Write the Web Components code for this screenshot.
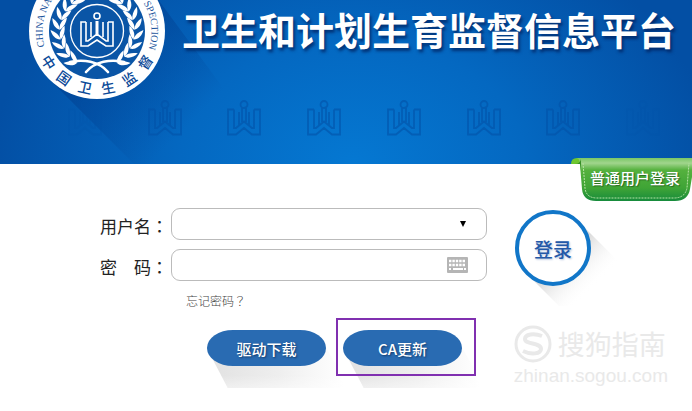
<!DOCTYPE html>
<html lang="zh-CN">
<head>
<meta charset="utf-8">
<title>卫生和计划生育监督信息平台</title>
<style>
	body {
		margin: 0;
		background: #fff;
		color: #222;
		font-family: "Noto Sans CJK SC", sans-serif;
	}
</style>
</head>
<body>

<template id="book-mark-template">
	<style>
		:host {
			display: block;
			width: 34px;
			height: 36px;
		}

		svg {
			display: block;
			width: 100%;
			height: 100%;
			fill: none;
			stroke: currentColor;
			stroke-width: 1.8;
		}
	</style>
	<svg viewBox="0 0 34 36" aria-hidden="true">
		<circle cx="17" cy="4.5" r="3.5"/>
		<path d="M7 9.5H1V34.5H9L17 28L25 34.5H33V9.5H27M7 9.5V28H9L17 21.5L25 28H27V9.5M12 12V25M22 12V25M15 8V22M19 8V22"/>
	</svg>
</template>

<template id="site-emblem-template">
	<style>
		:host {
			display: block;
			width: 138px;
			height: 100px;
		}

		svg {
			display: block;
		}

		.latin {
			font: 10px "Liberation Serif", serif;
			fill: #1d559c;
		}

		.han {
			font: 500 14px "Noto Sans CJK SC", sans-serif;
			fill: #0b4a98;
			text-anchor: middle;
		}
	</style>
	<svg width="138" height="100" viewBox="-69 -31 138 100" role="img" aria-label="中国卫生监督">
		<defs>
			<path id="ring" d="M-50 22A54.6 54.6 0 0 1 -52 -16A54.6 54.6 0 0 1 52 -16A54.6 54.6 0 0 1 51.5 18"/>
		</defs>
		<circle r="68" fill="#fff"/>
		<circle r="48" fill="#0a55a6"/>
		<g class="laurel" fill="#fff"></g>
		<g fill="none" stroke="#fff" stroke-width="2.6" stroke-linecap="round">
			<path d="M-27 31C-14 28 2 30 11 41"/>
			<path d="M27 31C14 28 -2 30 -11 41"/>
		</g>
		<circle r="26.5" fill="#0a55a6" stroke="#fff" stroke-width="1.3"/>
		<g fill="none" stroke="#fff" stroke-width="1.6">
			<circle cx="0" cy="-15" r="3"/>
			<path d="M-11 -9H-16V15H-9L0 9L9 15H16V-9H11M-11 -9V10H-9L0 3L9 10H11V-9M-6 -9V6M6 -9V6"/>
			<path d="M0 -10V3" stroke-width="3"/>
		</g>
		<text class="latin"><textPath href="#ring" startOffset="7">CHINA NA</textPath></text>
		<text class="latin" text-anchor="end"><textPath href="#ring" startOffset="100%">SPECTION</textPath></text>
		<g class="motto"></g>
	</svg>
</template>

<template id="site-header-template">
	<style>
		:host {
			display: flex;
			flex-direction: column;
			justify-content: space-between;
			box-sizing: border-box;
			height: 164px;
			padding-bottom: 28px;
			position: relative;
			background: radial-gradient(ellipse 360px 260px at 51% 100%, #0578d2 0%, #0468c1 48%, #034fa4 100%);
		}

		.shade {
			position: absolute;
			left: 0;
			top: 0;
		}

		.top {
			display: flex;
			position: relative;
			padding-left: 28px;
			gap: 16px;
		}

		h1 {
			margin: 0;
			color: #fff;
			font-size: 38px;
			font-weight: 700;
			line-height: 58px;
			white-space: nowrap;
			text-shadow: 2px 3px 3px rgba(0, 30, 90, 0.7);
		}

		.marks {
			display: flex;
			justify-content: space-between;
			position: relative;
			padding: 0 32px 0 68px;
			color: #0352a8;
		}

		book-mark {
			opacity: 0.6;
		}

		book-mark:first-child,
		book-mark:last-child {
			opacity: 0.2;
		}
	</style>
	<svg class="shade" width="330" height="164" aria-hidden="true">
		<defs>
			<linearGradient id="fall" gradientUnits="userSpaceOnUse" x1="98" y1="31" x2="190" y2="123">
				<stop offset="0" stop-color="#003c8c" stop-opacity="0.6"/>
				<stop offset="1" stop-color="#003c8c" stop-opacity="0"/>
			</linearGradient>
		</defs>
		<path d="M50 80L134 164H279L146 -17Z" fill="url(#fall)"/>
	</svg>
	<div class="top">
		<site-emblem></site-emblem>
		<h1><slot></slot></h1>
	</div>
	<div class="marks">
		<book-mark></book-mark>
		<book-mark></book-mark>
		<book-mark></book-mark>
		<book-mark></book-mark>
		<book-mark></book-mark>
		<book-mark></book-mark>
		<book-mark></book-mark>
		<book-mark></book-mark>
	</div>
</template>

<template id="ribbon-tab-template">
	<style>
		:host {
			position: absolute;
			top: 157px;
			right: 0;
			width: 121px;
			height: 45px;
		}

		svg {
			position: absolute;
			left: 0;
			top: 0;
		}

		button {
			position: relative;
			width: 100%;
			height: 100%;
			margin: 0;
			padding: 0 12px 4px 19px;
			border: 0;
			background: none;
			color: #fff;
			font: 500 15px "Noto Sans CJK SC", sans-serif;
			white-space: nowrap;
			text-shadow: 1px 1px 1px #27691f;
		}
	</style>
	<svg width="121" height="45" aria-hidden="true">
		<defs>
			<linearGradient id="green" x1="0" y1="0" x2="0" y2="1">
				<stop offset="0" stop-color="#7ac765"/>
				<stop offset="0.12" stop-color="#a1d58d"/>
				<stop offset="0.28" stop-color="#55b13e"/>
				<stop offset="0.7" stop-color="#3fa436"/>
				<stop offset="1" stop-color="#168b3c"/>
			</linearGradient>
		</defs>
		<path d="M0 7Q0 1 6 1H14V7Z" fill="#6ec62f"/>
		<path d="M6 1H121V20L119 32Q117 44 104 44H25Q12 44 11 32L9 8Q9 2 6 1Z" fill="url(#green)"/>
		<path d="M4 7Q9 7 10 2V14L9 7Z" fill="#378d27"/>
		<path d="M12 6L14 31Q15 41 26 41H103Q114 41 116 31L118 6" fill="none" stroke="#b8e3a5" stroke-width="1" stroke-dasharray="2 1"/>
	</svg>
	<button type="button"><slot></slot></button>
</template>

<template id="form-field-template">
	<style>
		:host {
			display: flex;
			align-items: center;
		}

		label {
			width: 71px;
			padding-top: 4px;
			font-size: 17px;
			font-weight: 400;
			line-height: 26px;
			white-space: pre;
			color: #222;
		}

		.colon {
			font-family: "Noto Sans CJK TC", sans-serif;
		}

		.box {
			display: flex;
			flex: 1;
			align-items: center;
			box-sizing: border-box;
			height: 32px;
			padding-right: 18px;
			border: 1px solid #bbb;
			border-radius: 9px;
			background: #fff;
		}

		input,
		select {
			flex: 1;
			min-width: 0;
			height: 28px;
			padding: 0 12px;
			border: 0;
			outline: 0;
			background: none;
			appearance: none;
			font: inherit;
		}
	</style>
	<label for="control"><span class="name"></span><span class="colon" lang="zh-TW">：</span></label>
	<div class="box"></div>
</template>

<template id="login-button-template">
	<style>
		:host {
			display: block;
			position: relative;
			width: 76px;
			height: 76px;
		}

		svg {
			position: absolute;
			left: 0;
			top: 0;
		}

		button {
			position: relative;
			box-sizing: border-box;
			width: 76px;
			height: 76px;
			padding: 0;
			border: 4px solid #1176c8;
			border-radius: 50%;
			background: #fff;
			color: #2459a8;
			font: 500 19px "Noto Sans CJK SC", sans-serif;
			text-shadow: 1px 1px 2px #b4c4dd;
		}
	</style>
	<svg width="110" height="100" aria-hidden="true">
		<defs>
			<linearGradient id="cast" gradientUnits="userSpaceOnUse" x1="50" y1="50" x2="78" y2="78">
				<stop offset="0" stop-color="#ddd"/>
				<stop offset="1" stop-color="#fff" stop-opacity="0"/>
			</linearGradient>
		</defs>
		<path d="M14 66L44 96H104V52L68 16Z" fill="url(#cast)"/>
	</svg>
	<button type="submit"><slot></slot></button>
</template>

<template id="pill-button-template">
	<style>
		:host {
			display: block;
			position: relative;
			width: 119px;
			height: 36px;
		}

		svg {
			position: absolute;
			left: 0;
			top: 0;
		}

		button {
			position: relative;
			width: 100%;
			height: 100%;
			padding: 0;
			border: 0;
			border-radius: 26px / 18px;
			background: #296bb2;
			color: #fff;
			font: 500 15px "Noto Sans CJK SC", sans-serif;
			text-shadow: 1px 1px 2px #123a6b;
		}

		:host([marked])::after {
			content: "";
			position: absolute;
			inset: -12px -14px -10px -7px;
			border: 2px solid #8030b0;
			pointer-events: none;
		}
	</style>
	<svg width="145" height="68" aria-hidden="true">
		<defs>
			<linearGradient id="cast" x1="0" y1="0" x2="1" y2="0">
				<stop offset="0" stop-color="#e2e2e2"/>
				<stop offset="0.5" stop-color="#eee"/>
				<stop offset="1" stop-color="#fff"/>
			</linearGradient>
			<linearGradient id="fade" x1="0" y1="0" x2="0" y2="1">
				<stop offset="0.6" stop-color="#fff" stop-opacity="0"/>
				<stop offset="1" stop-color="#fff" stop-opacity="0.7"/>
			</linearGradient>
		</defs>
		<path d="M5 28L25 66H128Q142 62 132 40L117 14Z" fill="url(#cast)"/>
		<path d="M5 28L25 66H128Q142 62 132 40L117 14Z" fill="url(#fade)"/>
	</svg>
	<button type="button"><slot></slot></button>
</template>

<template id="login-panel-template">
	<style>
		:host {
			display: block;
		}

		form {
			display: flex;
			gap: 28px;
			padding: 44px 101px 0 100px;
		}

		.fields {
			display: flex;
			flex: 1;
			flex-direction: column;
			gap: 9px;
		}

		a {
			align-self: flex-start;
			margin: 2px 0 0 86px;
			color: #444;
			font-size: 12px;
			font-weight: 300;
			line-height: 18px;
			text-decoration: none;
		}

		.mark {
			font-family: "Noto Sans CJK TC", sans-serif;
		}

		login-button {
			margin-top: 2px;
		}
	</style>
	<form>
		<div class="fields">
			<form-field name="用户名" kind="select"></form-field>
			<form-field name="密　码" kind="password"></form-field>
			<a href="#forgot">忘记密码<span class="mark" lang="zh-TW">？</span></a>
		</div>
		<login-button>登录</login-button>
	</form>
</template>

<template id="water-mark-template">
	<style>
		:host {
			display: block;
			color: #e9e9e9;
		}

		.brand {
			display: flex;
			align-items: center;
			gap: 6px;
			font-size: 27px;
			line-height: 40px;
		}

		.url {
			font: 400 19px/24px "Liberation Sans", sans-serif;
		}
	</style>
	<div class="brand">
		<svg width="38" height="38" viewBox="0 0 38 38" fill="none" stroke="currentColor" aria-hidden="true">
			<circle cx="19" cy="19" r="17" stroke-width="3"/>
			<path d="M28 11C20 8 11 9 11 14C11 20 27 17 27 24C27 29 17 30 9 26" stroke-width="4"/>
		</svg>
		<span>搜狗指南</span>
	</div>
	<div class="url">zhinan.sogou.com</div>
</template>

<template id="tool-bar-template">
	<style>
		:host {
			display: flex;
			justify-content: space-between;
			padding: 14px 24px 0 207px;
		}

		.buttons {
			display: flex;
			gap: 17px;
			padding-top: 6px;
		}
	</style>
	<div class="buttons"><slot></slot></div>
	<water-mark></water-mark>
</template>

<site-header>卫生和计划生育监督信息平台</site-header>
<ribbon-tab>普通用户登录</ribbon-tab>
<main>
	<login-panel></login-panel>
	<tool-bar>
		<pill-button>驱动下载</pill-button>
		<pill-button marked>CA更新</pill-button>
	</tool-bar>
</main>

<script>
	class TemplateElement extends HTMLElement {
		constructor() {
			super();
			this.attachShadow({mode: 'open'});
			const template = document.getElementById(this.localName + '-template').content;
			this.shadowRoot.appendChild(template.cloneNode(true));
		}
	}

	class SiteEmblem extends TemplateElement {
		connectedCallback() {
			const leaf = 'M0 0C3 -3.5 9 -3.5 14 0C9 2 4 2 0 0Z';
			let laurel = '';
			// leaves run up both sides in pairs from the crossed stems
			for (let angle = 122; angle < 250; angle += 15) {
				const rad = angle * Math.PI / 180;
				const x = 37 * Math.cos(rad);
				const y = 37 * Math.sin(rad);
				const shape = `<path d="${leaf}" transform="translate(${x} ${y}) rotate(${angle + 55})"/>` +
					`<path d="${leaf}" transform="translate(${x} ${y}) rotate(${angle + 118})"/>`;
				laurel += shape + `<g transform="scale(-1 1)">${shape}</g>`;
			}
			this.shadowRoot.querySelector('.laurel').innerHTML = laurel;

			const angles = [57, 35, 12, -11, -34, -57];
			this.shadowRoot.querySelector('.motto').innerHTML = [...'中国卫生监督']
				.map((char, i) => `<text class="han" y="63" transform="rotate(${angles[i]})">${char}</text>`)
				.join('');
		}
	}

	class FormField extends TemplateElement {
		connectedCallback() {
			this.shadowRoot.querySelector('.name').textContent = this.getAttribute('name');
			this.shadowRoot.querySelector('.box').innerHTML = this.getAttribute('kind') === 'select'
				? `<select id="control"><option></option></select>
					<svg width="8" height="8" aria-hidden="true"><path d="M0 1H6L3 7Z" fill="#000"/></svg>`
				: `<input id="control" type="password">
					<svg width="21" height="16" aria-hidden="true">
						<rect width="21" height="16" rx="1" fill="#b5b5b5"/>
						<path d="M2 4H19M2 8H19" stroke="#fff" stroke-width="2.5" stroke-dasharray="2.4 1"/>
						<path d="M2 12H4M6 12H16M17 12H19" stroke="#fff" stroke-width="2"/>
					</svg>`;
		}
	}

	customElements.define('book-mark', class extends TemplateElement {});
	customElements.define('site-emblem', SiteEmblem);
	customElements.define('site-header', class extends TemplateElement {});
	customElements.define('ribbon-tab', class extends TemplateElement {});
	customElements.define('form-field', FormField);
	customElements.define('login-button', class extends TemplateElement {});
	customElements.define('pill-button', class extends TemplateElement {});
	customElements.define('login-panel', class extends TemplateElement {});
	customElements.define('water-mark', class extends TemplateElement {});
	customElements.define('tool-bar', class extends TemplateElement {});
</script>
</body>
</html>
